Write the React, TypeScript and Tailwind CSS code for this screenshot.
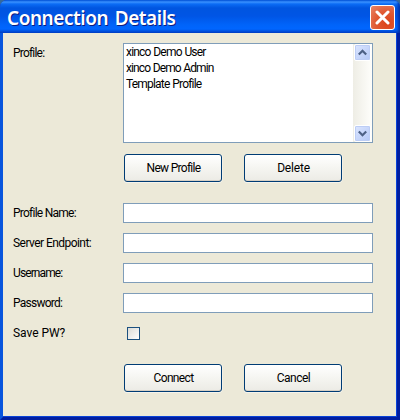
import React from "react";

const profiles = [
  { name: "xinco Demo User", spacing: "tracking-[-0.8px] [word-spacing:0.5px]" },
  { name: "xinco Demo Admin", spacing: "tracking-[-0.9px] [word-spacing:0.5px]" },
  { name: "Template Profile", spacing: "tracking-[-0.8px] [word-spacing:0.5px]" },
];

function ScrollButton({ up }: { up?: boolean }) {
  return (
    <button
      aria-label={up ? "Scroll up" : "Scroll down"}
      className="flex h-[17px] w-[17px] items-center justify-center rounded-[2px] border border-white bg-gradient-to-br from-[#dce6ff] to-[#b4c8f6] shadow-[inset_0_0_0_1px_#bccdf5]"
    >
      <svg width="9" height="7" viewBox="0 0 9 7" fill="none" stroke="#4d6185" strokeWidth="2.2">
        <path d={up ? "M0.8 5.5 4.5 1.8 8.2 5.5" : "M0.8 1.5 4.5 5.2 8.2 1.5"} />
      </svg>
    </button>
  );
}

function PushButton({ label, spacing }: { label: string; spacing: string }) {
  return (
    <button
      className={
        "h-7 w-[98px] rounded-[3px] border border-[#003c74] bg-gradient-to-b from-white via-[#f5f5f1] to-[#ecebe5] pb-px pl-px text-center shadow-[inset_0_-1px_0_#d6d0c5,0_1px_0_#f6f4ec,1px_0_0_#f3f0e5] " +
        spacing
      }
    >
      {label}
    </button>
  );
}

function Field({ label, spacing }: { label: string; spacing: string }) {
  return (
    <label className="flex h-5 items-center">
      <span className={"w-[110px] shrink-0 " + spacing}>{label}</span>
      <input type="text" className="h-5 w-[250px] border border-[#7f9db9] bg-white px-1 outline-none" />
    </label>
  );
}

export default function App() {
  return (
    <div className="h-[420px] w-[400px] overflow-hidden bg-[#356a9b] font-['Roboto','Liberation_Sans',sans-serif] text-[12px] leading-4 text-black">
      <div className="flex h-full flex-col overflow-hidden rounded-t-[7px] bg-[#0831d9]">
        <header className="flex h-[33px] shrink-0 items-center justify-between bg-[linear-gradient(to_bottom,#0058e0_0px,#3a92ff_2px,#0b6cf5_4px,#0055e0_8px,#0055e5_16px,#0064fa_25px,#0066ff_29px,#0052e0_31px,#0040c8_33px)] pl-[7px] pr-[5px] pt-0.5 shadow-[inset_-3px_0_3px_-1px_#0030a8]">
          <h1 className="whitespace-nowrap font-['Noto_Sans','Open_Sans',sans-serif] text-[19px] font-semibold leading-[34px] tracking-[-0.45px] [word-spacing:2px] text-white [text-shadow:1px_1px_0_#0b1c80]">
            Connection Details
          </h1>
          <button
            aria-label="Close"
            className="flex h-[25px] w-[25px] items-center justify-center rounded-[3px] border border-white bg-[radial-gradient(circle_at_70%_75%,#dc4318_0%,#e05a34_50%,#e98567_100%)]"
          >
            <svg width="15" height="15" viewBox="0 0 15 15" stroke="white" strokeWidth="3" strokeLinecap="round">
              <path d="M2 2 13 13M13 2 2 13" />
            </svg>
          </button>
        </header>
        <div className="flex-1 border-x-[3px] border-b-[3px] border-b-[#001ea0] border-l-[#0855dd] border-r-[#001ea0] bg-[#ece9d8] pl-2.5 pt-2.5 shadow-[inset_-1px_-1px_0_#0842d8]">
          <div className="flex">
            <span className="w-[110px] shrink-0 pt-[2px] tracking-[-0.8px]">Profile:</span>
            <div className="flex h-[100px] w-[250px] justify-between border border-[#7f9db9] bg-white">
              <ul className="pl-0.5">
                {profiles.map((profile) => (
                  <li key={profile.name} className={"h-4 whitespace-nowrap " + profile.spacing}>
                    {profile.name}
                  </li>
                ))}
              </ul>
              <div className="flex flex-col justify-between bg-gradient-to-r from-[#eeede5] to-[#fefefb] pl-px pr-px">
                <ScrollButton up />
                <ScrollButton />
              </div>
            </div>
          </div>
          <div className="ml-[111px] mt-[11px] flex gap-[22px]">
            <PushButton label="New Profile" spacing="tracking-[-0.7px]" />
            <PushButton label="Delete" spacing="tracking-[-0.2px]" />
          </div>
          <div className="mt-[21px] flex flex-col gap-2.5">
            <Field label="Profile Name:" spacing="tracking-[-0.75px]" />
            <Field label="Server Endpoint:" spacing="tracking-[-0.55px]" />
            <Field label="Username:" spacing="tracking-[-0.9px]" />
            <Field label="Password:" spacing="tracking-[-0.75px]" />
            <label className="flex h-5 items-center">
              <span className="w-[114px] tracking-[-0.05px]">Save PW?</span>
              <span className="mt-px h-[13px] w-[13px] border border-[#1c5180] bg-gradient-to-br from-[#dcdcd7] to-white" />
            </label>
          </div>
          <div className="ml-[111px] mt-[21px] flex gap-[22px]">
            <PushButton label="Connect" spacing="tracking-[-0.65px]" />
            <PushButton label="Cancel" spacing="tracking-[-0.5px]" />
          </div>
        </div>
      </div>
    </div>
  );
}
